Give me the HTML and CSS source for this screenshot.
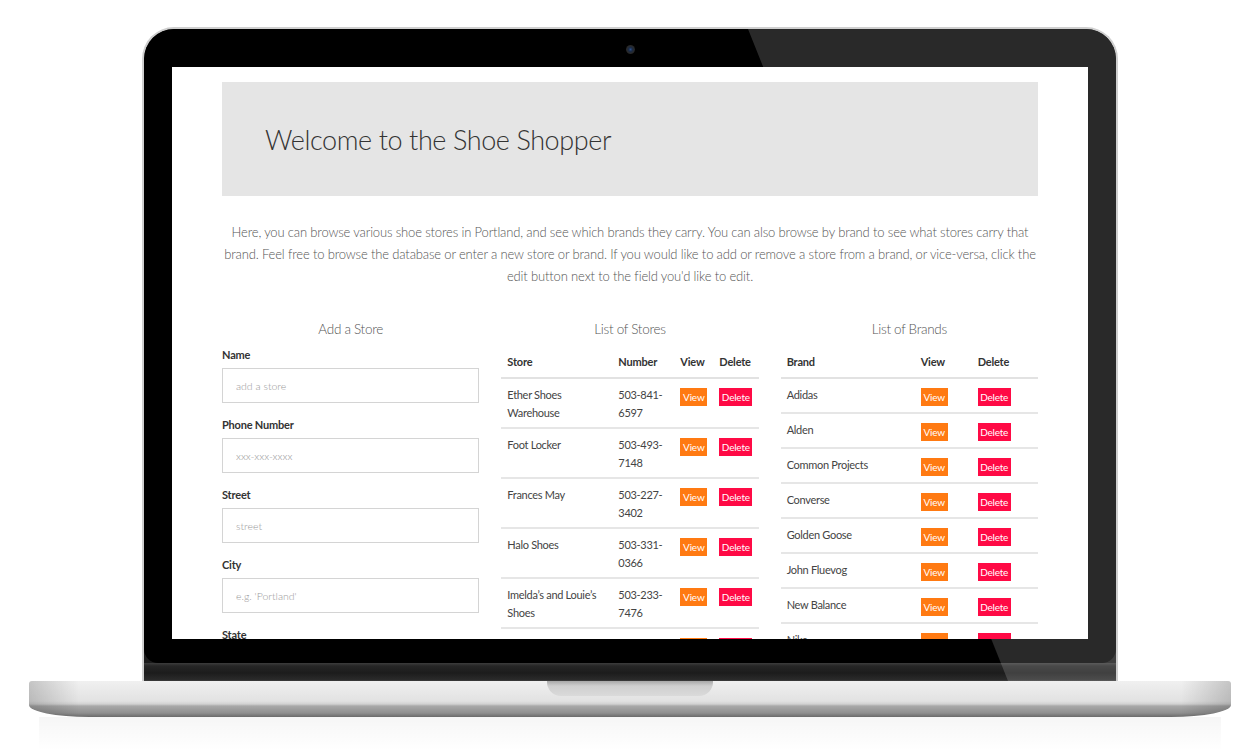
FILE: index.html
```html
<!DOCTYPE html>
<html lang="en">
<head>
  <meta charset="UTF-8" />
  <title>Shoe Shopper</title>
  <link rel="stylesheet" href="styles.css">
</head>
<body>
  <div class="laptop">
    <div class="lid">
      <div class="bezel">
        <span class="camera"></span>
        <div class="screen">
          <div class="page">
            <div class="jumbotron">
              <h1>Welcome to the Shoe Shopper</h1>
            </div>
            <p class="intro">Here, you can browse various shoe stores in Portland, and see which brands they carry. You can also browse by brand to see what stores carry that brand. Feel free to browse the database or enter a new store or brand. If you would like to add or remove a store from a brand, or vice-versa, click the edit button next to the field you'd like to edit.</p>

            <div class="columns">
              <div class="col">
                <h2>Add a Store</h2>
                <form class="store-form">
                  <label>Name</label>
                  <input type="text" placeholder="add a store">
                  <label>Phone Number</label>
                  <input type="text" placeholder="xxx-xxx-xxxx">
                  <label>Street</label>
                  <input type="text" placeholder="street">
                  <label>City</label>
                  <input type="text" placeholder="e.g. 'Portland'">
                  <label>State</label>
                  <input type="text" placeholder="e.g. 'OR'">
                </form>
              </div>

              <div class="col">
                <h2>List of Stores</h2>
                <table class="list stores">
                  <colgroup>
                    <col class="c-store"><col class="c-number"><col class="c-view"><col class="c-delete">
                  </colgroup>
                  <thead>
                    <tr><th>Store</th><th>Number</th><th>View</th><th>Delete</th></tr>
                  </thead>
                  <tbody>
                    <tr><td>Ether Shoes Warehouse</td><td>503-841-6597</td><td><button class="btn view">View</button></td><td><button class="btn delete">Delete</button></td></tr>
                    <tr><td>Foot Locker</td><td>503-493-7148</td><td><button class="btn view">View</button></td><td><button class="btn delete">Delete</button></td></tr>
                    <tr><td>Frances May</td><td>503-227-3402</td><td><button class="btn view">View</button></td><td><button class="btn delete">Delete</button></td></tr>
                    <tr><td>Halo Shoes</td><td>503-331-0366</td><td><button class="btn view">View</button></td><td><button class="btn delete">Delete</button></td></tr>
                    <tr><td>Imelda’s and Louie’s Shoes</td><td>503-233-7476</td><td><button class="btn view">View</button></td><td><button class="btn delete">Delete</button></td></tr>
                    <tr><td>Lloyd Center Shoes</td><td>503-282-2511</td><td><button class="btn view">View</button></td><td><button class="btn delete">Delete</button></td></tr>
                  </tbody>
                </table>
              </div>

              <div class="col">
                <h2>List of Brands</h2>
                <table class="list brands">
                  <colgroup>
                    <col class="c-brand"><col class="c-bview"><col class="c-bdelete">
                  </colgroup>
                  <thead>
                    <tr><th>Brand</th><th>View</th><th>Delete</th></tr>
                  </thead>
                  <tbody>
                    <tr><td>Adidas</td><td><button class="btn view">View</button></td><td><button class="btn delete">Delete</button></td></tr>
                    <tr><td>Alden</td><td><button class="btn view">View</button></td><td><button class="btn delete">Delete</button></td></tr>
                    <tr><td>Common Projects</td><td><button class="btn view">View</button></td><td><button class="btn delete">Delete</button></td></tr>
                    <tr><td>Converse</td><td><button class="btn view">View</button></td><td><button class="btn delete">Delete</button></td></tr>
                    <tr><td>Golden Goose</td><td><button class="btn view">View</button></td><td><button class="btn delete">Delete</button></td></tr>
                    <tr><td>John Fluevog</td><td><button class="btn view">View</button></td><td><button class="btn delete">Delete</button></td></tr>
                    <tr><td>New Balance</td><td><button class="btn view">View</button></td><td><button class="btn delete">Delete</button></td></tr>
                    <tr><td>Nike</td><td><button class="btn view">View</button></td><td><button class="btn delete">Delete</button></td></tr>
                  </tbody>
                </table>
              </div>
            </div>
          </div>
        </div>
      </div>
      <div class="hinge"></div>
    </div>
    <div class="base">
      <span class="notch"></span>
    </div>
    <div class="reflection"></div>
  </div>
</body>
</html>
```

FILE: styles.css
```css
body {
  margin: 0;
  background: #fff;
  font-family: Lato, "Liberation Sans", sans-serif;
  overflow: hidden;
}
.laptop {
  width: 1202px;
  margin: 0 auto;
}

/* lid */
.lid {
  position: relative;
  width: 972px;
  margin: 27px auto 0;
  border: 2px solid #cfcfcf;
  border-bottom: none;
  border-radius: 32px 32px 0 0;
  background: #1b1b1b;
  overflow: hidden;
}
.lid::after {
  content: "";
  position: absolute;
  top: 0;
  left: 0;
  right: 0;
  bottom: 0;
  background: rgba(255,255,255,0.16);
  clip-path: polygon(604px 0, 100% 0, 100% 100%, 864px 100%);
  pointer-events: none;
  z-index: 1;
}
.bezel {
  background: #000;
  border-radius: 30px 30px 14px 14px;
  padding: 38px 28px 24px;
  position: relative;
}
.camera {
  position: absolute;
  left: 482px;
  top: 16px;
  width: 9px;
  height: 9px;
  border-radius: 50%;
  background: radial-gradient(circle, #2c4f8a 0, #1b2a44 30%, #2a2a2a 60%, #111 100%);
}
.hinge {
  height: 18px;
  background: linear-gradient(#3d3d3d 0, #262626 3px, #1c1c1c 10px, #2b2b2b 17px, #444 18px);
}
.screen {
  position: relative;
  z-index: 2;
  height: 572px;
  background: #fff;
  overflow: hidden;
}

/* base */
.base {
  height: 36px;
  border-radius: 3px 3px 60px 60px / 3px 3px 12px 12px;
  background:
    linear-gradient(to right, rgba(0,0,0,0.18) 0, rgba(0,0,0,0) 50px, rgba(0,0,0,0) calc(100% - 50px), rgba(0,0,0,0.18) 100%),
    linear-gradient(#f0f0f0 0, #e2e2e2 20px, #d2d2d2 23px, #a9a9a9 25px, #8f8f8f 32px, #6a6a6a 36px);
}
.notch {
  display: block;
  width: 166px;
  height: 15px;
  margin: 0 auto;
  border-radius: 0 0 14px 14px;
  background: linear-gradient(#a8a8a8 0, #cfcfcf 5px, #dadada 100%);
}
.reflection {
  height: 34px;
  margin: 0 10px;
  background: linear-gradient(rgba(0,0,0,0.035), rgba(0,0,0,0));
}

/* page inside the screen */
.page {
  padding: 15px 50px 0;
  color: #444;
}
.jumbotron {
  height: 114px;
  background: #e5e5e5;
  display: flex;
  align-items: center;
  padding-left: 43px;
}
h1 {
  margin: 0;
  font-weight: 300;
  font-size: 27px;
  letter-spacing: -0.4px;
  color: #333;
}
.intro {
  margin: 25px 0 0;
  font-size: 13px;
  letter-spacing: -0.15px;
  line-height: 22px;
  font-weight: 300;
  color: #555;
  text-align: center;
}
.columns {
  display: grid;
  grid-template-columns: repeat(3, 1fr);
  gap: 22px;
  margin-top: 31px;
}
h2 {
  margin: 0;
  font-size: 13.5px;
  letter-spacing: -0.3px;
  line-height: 22px;
  font-weight: 300;
  color: #555;
  text-align: center;
}

/* form */
.store-form {
  display: flex;
  flex-direction: column;
  margin-top: 6px;
}
.store-form label {
  font-size: 11px;
  letter-spacing: -0.2px;
  line-height: 18px;
  font-weight: 700;
  color: #333;
  margin-bottom: 4px;
}
.store-form input {
  height: 35px;
  box-sizing: border-box;
  border: 1px solid #d4d4d4;
  padding: 0 13px;
  margin: 0 0 13px;
  font-family: inherit;
  font-size: 10.5px;
  font-weight: 300;
}
.store-form input::placeholder {
  color: #999;
}

/* tables */
.list {
  width: 100%;
  margin-top: 5px;
  border-collapse: collapse;
  table-layout: fixed;
  font-size: 11px;
  letter-spacing: -0.3px;
}
.c-store { width: 111px; }
.c-number { width: 62px; }
.c-view { width: 39px; }
.c-brand { width: 134px; }
.c-bview { width: 57px; }
.list th {
  text-align: left;
  font-weight: 700;
  color: #333;
  letter-spacing: -0.2px;
  line-height: 18px;
  padding: 8px 6px 6px;
  border-bottom: 2px solid #e2e2e2;
}
.list td {
  vertical-align: top;
  line-height: 18px;
  padding: 7px 6px 5px;
  border-bottom: 2px solid #e6e6e6;
  color: #444;
}
.btn {
  display: inline-block;
  vertical-align: top;
  margin: 2px 0 1px;
  height: 18px;
  padding: 0;
  border: none;
  font-family: inherit;
  font-size: 10px;
  letter-spacing: -0.2px;
  line-height: 18px;
  text-align: center;
  color: #fff;
  cursor: pointer;
}
.view { width: 27px; background: #ff7a12; }
.delete { width: 33px; background: #ff0a45; }
```
